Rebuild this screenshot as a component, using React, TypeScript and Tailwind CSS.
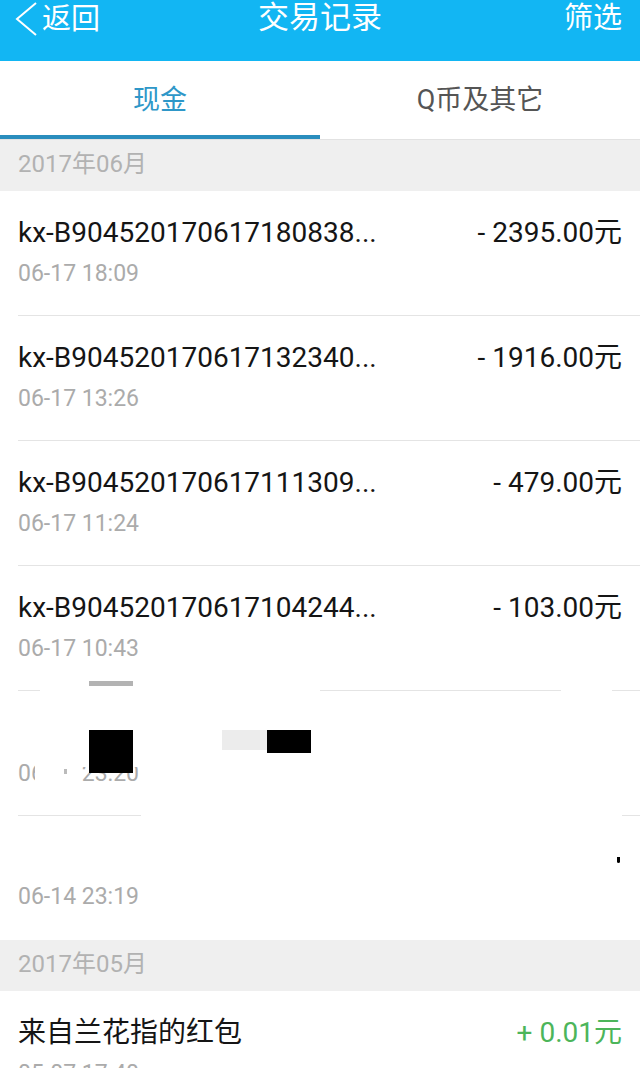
import React from "react";

type Tx = { title: string; amount: string; time: string; green?: boolean };

const rows: Tx[] = [
  { title: "kx-B904520170617180838...", amount: "- 2395.00元", time: "06-17 18:09" },
  { title: "kx-B904520170617132340...", amount: "- 1916.00元", time: "06-17 13:26" },
  { title: "kx-B904520170617111309...", amount: "- 479.00元", time: "06-17 11:24" },
  { title: "kx-B904520170617104244...", amount: "- 103.00元", time: "06-17 10:43" },
];

function Row({ tx, children }: { tx: Tx; children?: React.ReactNode }) {
  return (
    <div className="relative h-[124px] pl-[18px] pr-[18px] pt-[25px]">
      <div className="flex items-baseline justify-between">
        <span className="text-[28px] leading-[34px] text-[#151515]">{tx.title}</span>
        <span
          className={
            tx.green
              ? "text-[28px] leading-[34px] text-[#4cb55a]"
              : "text-[28px] leading-[34px] text-[#151515]"
          }
        >
          {tx.amount}
        </span>
      </div>
      <div className="mt-[10px] text-[23px] leading-[28px] text-[#ababab]">{tx.time}</div>
      {children}
    </div>
  );
}

function Divider() {
  return <div className="ml-[18px] h-px bg-[#e4e4e4]" />;
}

function Section({ label }: { label: string }) {
  return (
    <div className="flex h-[51px] items-center bg-[#efefef] px-[18px] pb-[3px] text-[24px] text-[#b2b2b2]">
      {label}
    </div>
  );
}

export default function App() {
  return (
    <div className="min-h-screen w-full bg-white font-['Roboto','Noto_Sans_CJK_SC',sans-serif]">
      {/* Header */}
      <div className="flex h-[61px] items-start bg-[#12b6f3] text-white">
        <div className="flex w-[170px] items-center pl-[14px] pt-[1px]">
          <svg width="25" height="36" viewBox="0 0 25 36" className="mr-[3px]">
            <polyline points="22,2 3,18 22,34" fill="none" stroke="white" strokeWidth="2" />
          </svg>
          <span className="text-[29px] leading-[36px]">返回</span>
        </div>
        <div className="flex-1 text-center text-[31px] leading-[36px]">交易记录</div>
        <div className="w-[170px] pr-[18px] text-right text-[29px] leading-[36px]">筛选</div>
      </div>

      {/* Tabs */}
      <div className="flex h-[79px] border-b border-[#e2e2e2]">
        <div className="flex flex-1 flex-col">
          <div className="flex flex-1 items-center justify-center pt-[4px] text-[27px] text-[#2e97c8]">现金</div>
          <div className="h-[4px] bg-[#2a8dbd]" />
        </div>
        <div className="flex flex-1 flex-col">
          <div className="flex flex-1 items-center justify-center pt-[4px] text-[27px] text-[#555555]">Q币及其它</div>
          <div className="h-[4px]" />
        </div>
      </div>

      <Section label="2017年06月" />
      <Row tx={rows[0]} />
      <Divider />
      <Row tx={rows[1]} />
      <Divider />
      <Row tx={rows[2]} />
      <Divider />
      <Row tx={rows[3]}>
        <div className="absolute left-[89px] top-[115px] h-[5px] w-[44px] bg-[#b3b3b3]" />
      </Row>

      {/* partially erased divider */}
      <div className="flex h-px">
        <div className="w-[18px]" />
        <div className="w-[22px] bg-[#e4e4e4]" />
        <div className="w-[280px]" />
        <div className="w-[241px] bg-[#e4e4e4]" />
        <div className="w-[51px]" />
        <div className="flex-1 bg-[#e4e4e4]" />
      </div>

      {/* redacted row */}
      <div className="relative h-[124px] pl-[18px] pt-[25px]">
        <div className="h-[34px]" />
        <div className="mt-[10px] text-[23px] leading-[28px] text-[#ababab]">06-15 23:20</div>
        <div className="absolute left-[35px] top-[62px] h-[34px] w-[42px] bg-white" />
        <div className="absolute left-[60px] top-[50px] h-[26px] w-[80px] bg-white" />
        <div className="absolute left-[64px] top-[78px] h-[5px] w-[3px] bg-[#bbbbbb]" />
        <div className="absolute left-[89px] top-[39px] h-[43px] w-[44px] bg-black" />
        <div className="absolute left-[222px] top-[39px] h-[20px] w-[45px] bg-[#ececec]" />
        <div className="absolute left-[267px] top-[39px] h-[23px] w-[44px] bg-black" />
      </div>

      <div className="flex h-px">
        <div className="w-[18px]" />
        <div className="w-[123px] bg-[#e4e4e4]" />
        <div className="w-[481px]" />
        <div className="flex-1 bg-[#e4e4e4]" />
      </div>

      <div className="relative h-[124px] pl-[18px] pt-[25px]">
        <div className="h-[34px]" />
        <div className="mt-[8px] text-[23px] leading-[28px] text-[#ababab]">06-14 23:19</div>
        <div className="absolute left-[617px] top-[41px] h-[6px] w-[3px] rounded-b-sm bg-black" />
      </div>

      <Section label="2017年05月" />
      <Row tx={{ title: "来自兰花指的红包", amount: "+ 0.01元", time: "05-07 17:40", green: true }} />
    </div>
  );
}
